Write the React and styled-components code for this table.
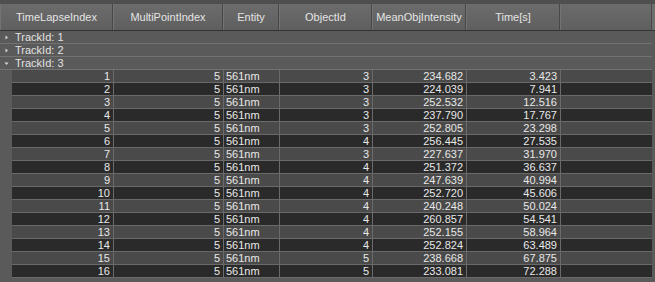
import styled, { createGlobalStyle } from 'styled-components'

const GlobalStyle = createGlobalStyle`
    html, body {
        margin: 0;
        padding: 0;
        background: #5a5a5a;
    }
    body {
        font-family: "Liberation Sans", Arial, sans-serif;
        font-size: 11px;
        color: #e2e2e2;
    }
`;

const Container = styled.div`
    width: 655px;
    height: 282px;
    overflow: hidden;
    background: #5a5a5a;
    display: flex;
    flex-direction: column;
`;

const TopStrip = styled.div`
    height: 4px;
    background: #4f4f4f;
`;

const Header = styled.div`
    display: grid;
    grid-template-columns: 113px 110px 56px 93px 94px 94px 92px 3px;
    height: 26px;
    border-bottom: 1px solid #333;
`;

const HeaderCell = styled.div`
    display: flex;
    align-items: center;
    justify-content: center;
    background: linear-gradient(#6c6c6c, #5f5f5f);
    border-right: 1px solid #484848;
    border-left: 1px solid #737373;
    color: #e4e4e4;
    white-space: nowrap;
`;

const HeaderEdge = styled.div`
    background: #6e6e6e;
`;

const GroupRow = styled.div`
    display: flex;
    align-items: center;
    height: 12px;
    padding-left: 4px;
    margin-right: 3px;
    border-bottom: 1px solid #727272;
    background: #5a5a5a;
`;

const Arrow = styled.span`
    width: 11px;
    display: flex;
    justify-content: flex-start;
    align-items: center;
    svg {
        display: block;
    }
`;

const GroupLabel = styled.span`
    line-height: 12px;
`;

const Rows = styled.div`
    display: flex;
    flex-direction: column;
    margin-left: 12px;
    margin-right: 3px;
`;

const DataRow = styled.div`
    display: grid;
    grid-template-columns: 101px 109px 55px 92px 93px 93px 91px;
    column-gap: 1px;
    background: #6a6a6a;
    border-bottom: 1px solid #6a6a6a;
    height: 12px;
`;

const Cell = styled.div`
    background: ${props => props.$dark ? "#2a2a2a" : "#4a4a4a"};
    text-align: ${props => props.$left ? "left" : "right"};
    padding: 0 3px 0 2px;
    line-height: 12px;
    white-space: nowrap;
    overflow: hidden;
    color: #e8e8e8;
`;

const columns = ["TimeLapseIndex", "MultiPointIndex", "Entity", "ObjectId", "MeanObjIntensity", "Time[s]"];

const data = [
    [1, 3, "234.682", "3.423"],
    [2, 3, "224.039", "7.941"],
    [3, 3, "252.532", "12.516"],
    [4, 3, "237.790", "17.767"],
    [5, 3, "252.805", "23.298"],
    [6, 4, "256.445", "27.535"],
    [7, 3, "227.637", "31.970"],
    [8, 4, "251.372", "36.637"],
    [9, 4, "247.639", "40.994"],
    [10, 4, "252.720", "45.606"],
    [11, 4, "240.248", "50.024"],
    [12, 4, "260.857", "54.541"],
    [13, 4, "252.155", "58.964"],
    [14, 4, "252.824", "63.489"],
    [15, 5, "238.668", "67.875"],
    [16, 5, "233.081", "72.288"],
];

const Triangle = ({ open }) => (
    <svg width="5" height="5" viewBox="0 0 5 5">
        {open
            ? <polygon points="0.5,1.5 4.5,1.5 2.5,4" fill="#d8d8d8" />
            : <polygon points="1.5,0.5 4,2.5 1.5,4.5" fill="#d8d8d8" />}
    </svg>
);

const App = () => {
    return (
        <Container>
            <GlobalStyle />
            <TopStrip />
            <Header>
                {columns.map(c => <HeaderCell key={c}>{c}</HeaderCell>)}
                <HeaderCell />
                <HeaderEdge />
            </Header>
            {[1, 2, 3].map(id => (
                <GroupRow key={id}>
                    <Arrow><Triangle open={id === 3} /></Arrow>
                    <GroupLabel>TrackId: {id}</GroupLabel>
                </GroupRow>
            ))}
            <Rows>
                {data.map(([idx, obj, mean, time], i) => {
                    const dark = i % 2 === 1;
                    return (
                        <DataRow key={idx}>
                            <Cell $dark={dark}>{idx}</Cell>
                            <Cell $dark={dark}>5</Cell>
                            <Cell $dark={dark} $left>561nm</Cell>
                            <Cell $dark={dark}>{obj}</Cell>
                            <Cell $dark={dark}>{mean}</Cell>
                            <Cell $dark={dark}>{time}</Cell>
                            <Cell $dark={dark} />
                        </DataRow>
                    );
                })}
            </Rows>
        </Container>
    );
};

export default App
